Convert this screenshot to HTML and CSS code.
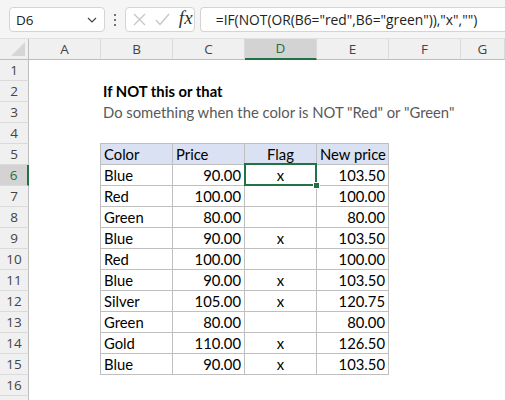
FILE: index.html
```html
<!DOCTYPE html>
<html>
<head>
<meta charset="utf-8">
<link rel="stylesheet" href="styles.css">
</head>
<body>
<div class="topbar">
  <div class="namebox">
    <span class="name">D6</span>
    <svg class="chev" width="10" height="6" viewBox="0 0 10 6"><path d="M1 1 L5 5 L9 1" fill="none" stroke="#444" stroke-width="1.2"/></svg>
  </div>
  <div class="dots"><i></i><i></i><i></i></div>
  <div class="fxbox">
    <svg width="13" height="13" viewBox="0 0 13 13"><path d="M1 1 L12 12 M12 1 L1 12" stroke="#c6c6c6" stroke-width="1.3" fill="none"/></svg>
    <svg width="15" height="13" viewBox="0 0 15 13"><path d="M1 7 L5 11.5 L14 1" stroke="#c6c6c6" stroke-width="1.3" fill="none"/></svg>
    <span class="fx">fx</span>
  </div>
  <div class="formula">=IF(NOT(OR(B6="red",B6="green")),"x","")</div>
</div>
<div class="sheet">
  <div class="row hdr">
    <div class="corner"><svg width="14" height="14" viewBox="0 0 14 14"><path d="M14 0 L14 14 L0 14 Z" fill="#d6d6d6"/></svg></div>
    <div class="ch">A</div><div class="ch">B</div><div class="ch">C</div><div class="ch sel">D</div><div class="ch">E</div><div class="ch">F</div><div class="ch">G</div>
  </div>
  <div class="row"><div class="rh">1</div></div>
  <div class="row"><div class="rh">2</div><div></div><div class="title">If NOT this or that</div></div>
  <div class="row"><div class="rh">3</div><div></div><div class="sub">Do something when the color is NOT "Red" or "Green"</div></div>
  <div class="row"><div class="rh">4</div></div>
  <div class="row"><div class="rh">5</div><div></div><div class="t th tl">Color</div><div class="t th">Price</div><div class="t th ctr">Flag</div><div class="t th">New price</div></div>
  <div class="row"><div class="rh rsel">6</div><div></div><div class="t tl">Blue</div><div class="t num">90.00</div><div class="t ctr active">x<span class="selbox"></span><span class="handle"></span></div><div class="t num">103.50</div></div>
  <div class="row"><div class="rh">7</div><div></div><div class="t tl">Red</div><div class="t num">100.00</div><div class="t ctr"></div><div class="t num">100.00</div></div>
  <div class="row"><div class="rh">8</div><div></div><div class="t tl">Green</div><div class="t num">80.00</div><div class="t ctr"></div><div class="t num">80.00</div></div>
  <div class="row"><div class="rh">9</div><div></div><div class="t tl">Blue</div><div class="t num">90.00</div><div class="t ctr">x</div><div class="t num">103.50</div></div>
  <div class="row"><div class="rh">10</div><div></div><div class="t tl">Red</div><div class="t num">100.00</div><div class="t ctr"></div><div class="t num">100.00</div></div>
  <div class="row"><div class="rh">11</div><div></div><div class="t tl">Blue</div><div class="t num">90.00</div><div class="t ctr">x</div><div class="t num">103.50</div></div>
  <div class="row"><div class="rh">12</div><div></div><div class="t tl">Silver</div><div class="t num">105.00</div><div class="t ctr">x</div><div class="t num">120.75</div></div>
  <div class="row"><div class="rh">13</div><div></div><div class="t tl">Green</div><div class="t num">80.00</div><div class="t ctr"></div><div class="t num">80.00</div></div>
  <div class="row"><div class="rh">14</div><div></div><div class="t tl">Gold</div><div class="t num">110.00</div><div class="t ctr">x</div><div class="t num">126.50</div></div>
  <div class="row"><div class="rh">15</div><div></div><div class="t tl">Blue</div><div class="t num">90.00</div><div class="t ctr">x</div><div class="t num">103.50</div></div>
  <div class="row"><div class="rh">16</div></div>
  <div class="row"><div class="rh"></div></div>
</div>
</body>
</html>
```

FILE: styles.css
```css
html, body {
  margin: 0;
  padding: 0;
  background: #ffffff;
  overflow: hidden;
  width: 505px;
  height: 400px;
}
.topbar {
  height: 39px;
  background: #f5f5f5;
  border-bottom: 1px solid #e0e0e0;
  display: flex;
  align-items: flex-start;
  padding-top: 7px;
  box-sizing: border-box;
  padding-left: 9px;
}
.namebox {
  width: 100px;
  height: 25px;
  box-sizing: border-box;
  background: #fff;
  border: 1px solid #d4d4d4;
  border-radius: 4px;
  display: flex;
  align-items: center;
  justify-content: space-between;
  padding: 0 7px 0 6px;
  font-family: "Open Sans", "Noto Sans", sans-serif;
  font-size: 13.5px;
  color: #222;
}
.chev { margin-top: 1px; }
.dots {
  width: 21px;
  height: 25px;
  display: flex;
  flex-direction: column;
  align-items: center;
  justify-content: center;
  gap: 3px;
}
.dots i {
  display: block;
  width: 2px;
  height: 2px;
  background: #444;
  border-radius: 1px;
}
.fxbox {
  width: 73px;
  height: 25px;
  box-sizing: border-box;
  background: #fff;
  border: 1px solid #d4d4d4;
  border-radius: 4px;
  display: flex;
  align-items: center;
  padding-left: 7px;
  gap: 9px;
}
.fx {
  font-family: "Liberation Serif", serif;
  font-style: italic;
  font-size: 19px;
  color: #333;
  margin-top: -3px;
}
.formula {
  margin-left: 5px;
  width: 320px;
  height: 25px;
  box-sizing: border-box;
  background: #fff;
  border: 1px solid #d4d4d4;
  border-right: none;
  border-radius: 4px 0 0 4px;
  padding-left: 15px;
  font-family: "Open Sans", "Noto Sans", sans-serif;
  font-size: 13.8px;
  line-height: 23px;
  color: #222;
  white-space: nowrap;
}
.sheet {
  font-family: Lato, "Liberation Sans", sans-serif;
  font-size: 14.8px;
}
.row {
  display: grid;
  grid-template-columns: 29px repeat(6, 72px) 1fr;
  height: 21px;
}
.row > div {
  box-sizing: border-box;
  height: 21px;
  line-height: 20px;
  white-space: nowrap;
}
.hdr {
  background: #f0f0f0;
}
.hdr > div {
  border-bottom: 1px solid #bdbdbd;
}
.corner {
  border-right: 1px solid #bdbdbd;
  display: flex;
  align-items: flex-end;
  justify-content: flex-end;
  padding: 0 3px 3px 0;
}
.ch {
  text-align: center;
  font-family: "Open Sans", "Noto Sans", sans-serif;
  font-size: 13.5px;
  color: #444;
  border-right: 1px solid #dadada;
}
.ch.sel {
  background: #d3d3d3;
  color: #1e6e42;
  border-bottom: 2px solid #217346;
  line-height: 19px;
}
.rh {
  background: #f0f0f0;
  border-right: 1px solid #bdbdbd;
  border-bottom: 1px solid #dadada;
  text-align: center;
  font-family: "Open Sans", "Noto Sans", sans-serif;
  font-size: 13.5px;
  color: #444;
}
.rh.rsel {
  background: #d3d3d3;
  color: #1e6e42;
  border-right: 2px solid #217346;
}
.title {
  font-weight: bold;
  padding-left: 2px;
}
.sub {
  color: #595959;
  padding-left: 2px;
}
.t {
  border-right: 1px solid #bfbfbf;
  border-bottom: 1px solid #bfbfbf;
  padding: 0 3px;
}
.tl { box-shadow: -1px 0 0 #bfbfbf; }
.th { background: #d9e1f2; box-shadow: 0 -1px 0 #bfbfbf; }
.th.tl { box-shadow: -1px 0 0 #bfbfbf, 0 -1px 0 #bfbfbf, -1px -1px 0 #bfbfbf; }
.num { text-align: right; }
.ctr { text-align: center; }
.active { position: relative; }
.selbox {
  position: absolute;
  left: -1px;
  top: -2px;
  right: -1px;
  bottom: -1px;
  border: 2px solid #217346;
}
.handle {
  position: absolute;
  right: -4px;
  bottom: -4px;
  width: 5px;
  height: 5px;
  background: #217346;
  border: 1px solid #fff;
}
```
